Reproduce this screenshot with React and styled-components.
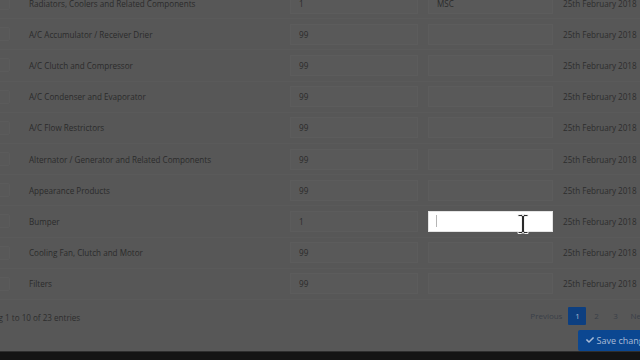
import React from 'react';
import styled, { createGlobalStyle } from 'styled-components';
import { FaCheck } from 'react-icons/fa';

const GlobalStyle = createGlobalStyle`
  html, body {
    margin: 0;
    padding: 0;
    background: #575757;
    overflow: hidden;
  }
  body {
    font-family: "Open Sans", "Liberation Sans", sans-serif;
  }
`;

const Page = styled.div`
  width: 640px;
  height: 360px;
  display: flex;
  flex-direction: column;
  overflow: hidden;
  background: #575757;
`;

const Content = styled.div`
  flex: 1;
  width: 708px;
  margin-left: -46px;
  margin-top: -12px;
  color: #2b2b2b;
  font-size: 8.1px;
`;

const Table = styled.div`
  display: flex;
  flex-direction: column;
`;

const Row = styled.div`
  display: grid;
  grid-template-columns: 67px 264px 138px 135px 1fr;
  height: 31.2px;
  align-items: center;
  border-bottom: 1px solid #5a5a5a;
  box-sizing: border-box;
`;

const CheckCell = styled.div`
  display: flex;
  justify-content: flex-end;
  padding-right: 11px;
`;

const CheckBox = styled.span`
  width: 12px;
  height: 12px;
  border: 1px solid #5b5b5b;
  border-radius: 2px;
  background: #585858;
`;

const Cell = styled.div`
  padding: 0 ${(p) => p.$pad || 5}px;
  white-space: nowrap;
  position: relative;
`;

const Field = styled.div`
  height: 21px;
  box-sizing: border-box;
  border: 1px solid ${(p) => (p.$focused ? '#e4e4e4' : '#5c5c5c')};
  background: ${(p) => (p.$focused ? '#ffffff' : '#595959')};
  display: flex;
  align-items: center;
  padding-left: 8px;
  position: relative;
  z-index: ${(p) => (p.$focused ? 2 : 0)};
`;

const Caret = styled.span`
  width: 1px;
  height: 12px;
  background: #b5b5b5;
  margin-left: -1px;
`;

const Pointer = styled.svg`
  position: absolute;
  left: 88px;
  top: 1px;
  width: 12px;
  height: 22px;
`;

const DateText = styled.span`
  color: #2d2d2d;
`;

const Footer = styled.div`
  display: flex;
  justify-content: space-between;
  align-items: center;
  margin-top: 7px;
  padding-left: 17px;
  padding-right: 9px;
`;

const Info = styled.span`
  color: #2d2d2d;
  font-size: 8.1px;
  padding-top: 3px;
`;

const Pager = styled.div`
  display: flex;
  align-items: center;
`;

const PageItem = styled.span`
  display: inline-flex;
  align-items: center;
  justify-content: center;
  height: 18px;
  min-width: ${(p) => (p.$wide ? 'auto' : '18px')};
  padding: 0 ${(p) => (p.$wide ? 5 : 0)}px;
  margin-left: 1px;
  font-size: 8px;
  color: ${(p) => (p.$active ? '#a7b7cf' : '#3a3f48')};
  background: ${(p) => (p.$active ? '#0d3f80' : 'transparent')};
  border-radius: 1px;
`;

const Actions = styled.div`
  display: flex;
  justify-content: flex-end;
  margin-top: 5px;
  padding-right: 1px;
`;

const SaveButton = styled.button`
  display: inline-flex;
  align-items: center;
  gap: 3px;
  height: 21px;
  padding: 0 8px;
  border: none;
  border-radius: 2px;
  background: #0b4791;
  color: #a9bbd6;
  font-family: "Open Sans", "Liberation Sans", sans-serif;
  font-size: 9px;
`;

const BottomBar = styled.div`
  height: 8px;
  background: #141414;
  border-top: 1px solid #2e2e2e;
`;

const rows = [
  { name: 'Radiators, Coolers and Related Components', count: '1', code: 'MSC' },
  { name: 'A/C Accumulator / Receiver Drier', count: '99', code: '' },
  { name: 'A/C Clutch and Compressor', count: '99', code: '' },
  { name: 'A/C Condenser and Evaporator', count: '99', code: '' },
  { name: 'A/C Flow Restrictors', count: '99', code: '' },
  { name: 'Alternator / Generator and Related Components', count: '99', code: '' },
  { name: 'Appearance Products', count: '99', code: '' },
  { name: 'Bumper', count: '1', code: '', focused: true },
  { name: 'Cooling Fan, Clutch and Motor', count: '99', code: '' },
  { name: 'Filters', count: '99', code: '' },
];

function IBeam() {
  return (
    <Pointer viewBox="0 0 12 22">
      <path
        d="M1 1.5 H4.5 Q6 1.5 6 3 Q6 1.5 7.5 1.5 H11 V3.5 H7.5 V18.5 H11 V20.5 H7.5 Q6 20.5 6 19 Q6 20.5 4.5 20.5 H1 V18.5 H4.5 V3.5 H1 Z"
        fill="#2a2a2a"
        stroke="#f2f2f2"
        strokeWidth="1"
      />
    </Pointer>
  );
}

export default function App() {
  return (
    <>
      <GlobalStyle />
      <Page>
        <Content>
          <Table>
            {rows.map((r) => (
              <Row key={r.name}>
                <CheckCell>
                  <CheckBox />
                </CheckCell>
                <Cell $pad={8}>{r.name}</Cell>
                <Cell>
                  <Field>{r.count}</Field>
                </Cell>
                <Cell>
                  <Field $focused={r.focused}>
                    {r.focused ? <Caret /> : r.code}
                    {r.focused && <IBeam />}
                  </Field>
                </Cell>
                <Cell>
                  <DateText>25th February 2018</DateText>
                </Cell>
              </Row>
            ))}
          </Table>
          <Footer>
            <Info>Showing 1 to 10 of 23 entries</Info>
            <Pager>
              <PageItem $wide>Previous</PageItem>
              <PageItem $active>1</PageItem>
              <PageItem>2</PageItem>
              <PageItem>3</PageItem>
              <PageItem $wide>Next</PageItem>
            </Pager>
          </Footer>
          <Actions>
            <SaveButton>
              <FaCheck size={8} />
              Save changes
            </SaveButton>
          </Actions>
        </Content>
        <BottomBar />
      </Page>
    </>
  );
}
